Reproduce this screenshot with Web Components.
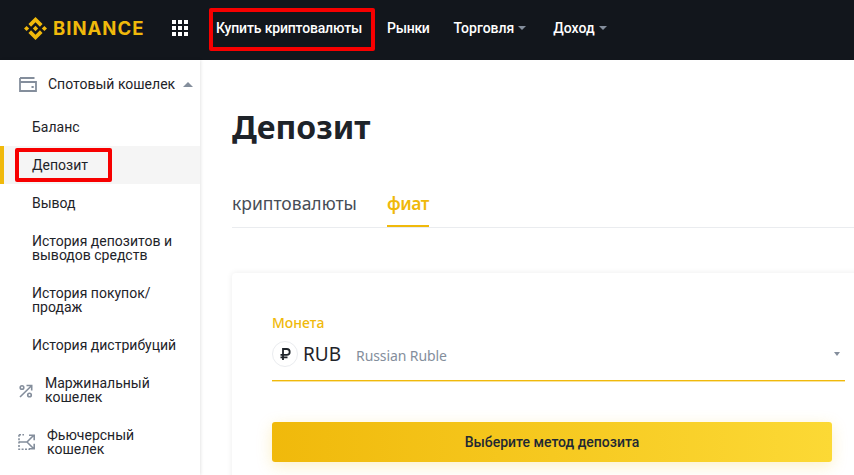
<!DOCTYPE html>
<html lang="ru">
<head>
<meta charset="utf-8">
<title>Депозит</title>
<style>
    html, body {
        margin: 0;
        height: 475px;
        overflow: hidden;
        background: #fff;
        font-family: "Noto Sans", Roboto, sans-serif;
    }
</style>
</head>
<body>
<app-page></app-page>

<script>
const NAV_FONT = `Roboto, "Noto Sans", sans-serif`;

class RedMark extends HTMLElement {
    constructor() {
        super();
        this.attachShadow({mode: 'open'}).innerHTML = `
<style>
    :host {
        display: inline-flex;
        align-items: center;
        position: relative;
    }
    i {
        position: absolute;
        inset: var(--mark-inset, 0);
        border: 4px solid #f70000;
        border-radius: 2px;
        pointer-events: none;
    }
</style>
<slot></slot><i></i>`;
    }
}

class TopBar extends HTMLElement {
    constructor() {
        super();
        this.attachShadow({mode: 'open'}).innerHTML = `
<style>
    :host {
        display: flex;
        align-items: center;
        box-sizing: border-box;
        height: 60px;
        padding: 0 0 4px 24px;
        background: #12161c;
        color: #fff;
        font: 500 14px ${NAV_FONT};
    }
    .logo {
        display: flex;
        align-items: center;
        gap: 6px;
        width: 148px;
        color: #f0b90b;
        font: 700 18.5px Inter, sans-serif;
        letter-spacing: 1px;
    }
    .apps {
        display: grid;
        grid-template-columns: repeat(3, 4px);
        gap: 2px;
        width: 16px;
        margin-right: 28px;
    }
    .apps i {
        width: 4px;
        height: 4px;
        background: #fff;
    }
    red-mark {
        --mark-inset: -12px -13px -15px -7px;
        margin-right: 25px;
        letter-spacing: -.16px;
    }
    .link {
        display: flex;
        align-items: center;
        gap: 4px;
        margin-right: 27px;
    }
    .link.short { margin-right: 24px; letter-spacing: -.3px; }
    .caret {
        width: 0;
        height: 0;
        border: 4px solid transparent;
        border-top: 4px solid #848e9c;
        border-bottom: 0;
    }
</style>
<div class="logo">
    <svg width="23" height="23" viewBox="0 0 24 24" fill="#f0b90b"><path d="M7.34 10.08 12 5.42l4.66 4.66 2.71-2.71L12 0 4.63 7.37zM0 12l2.71-2.71L5.42 12l-2.71 2.71zM7.34 13.92 12 18.58l4.66-4.66 2.71 2.71L12 24l-7.37-7.37zM18.58 12l2.71-2.71L24 12l-2.71 2.71zM14.75 12 12 9.25 9.25 12 12 14.75z"/></svg>
    <span>BINANCE</span>
</div>
<div class="apps"><i></i><i></i><i></i><i></i><i></i><i></i><i></i><i></i><i></i></div>
<red-mark>Купить криптовалюты</red-mark>
<div class="link short">Рынки</div>
<div class="link">Торговля<span class="caret"></span></div>
<div class="link">Доход<span class="caret"></span></div>`;
    }
}

class SideItem extends HTMLElement {
    constructor() {
        super();
        this.attachShadow({mode: 'open'}).innerHTML = `
<style>
    :host {
        display: flex;
        align-items: center;
        box-sizing: border-box;
        min-height: 38px;
        padding: 12px 12px 12px 32px;
        font-size: 14px;
        line-height: 14px;
        color: #1e2329;
    }
    :host([tall]) { min-height: 52px; }
    :host([active]) {
        background: #f5f5f5;
        box-shadow: inset 4px 0 0 #f0b90b;
    }
</style>
<slot></slot>`;
    }
}

class SideGroup extends HTMLElement {
    constructor() {
        super();
        this.attachShadow({mode: 'open'}).innerHTML = `
<style>
    :host {
        display: flex;
        align-items: center;
        box-sizing: border-box;
        min-height: 52px;
        padding-left: 19px;
        padding-right: var(--group-end, 24px);
        font-size: 14px;
        line-height: 14px;
        color: #1e2329;
    }
    .icon { display: flex; width: var(--icon-width, 26px); flex: none; }
    .text { flex: 1; }
</style>
<span class="icon"><slot name="icon"></slot></span>
<span class="text"><slot></slot></span>
<slot name="after"></slot>`;
    }
}

class SideBar extends HTMLElement {
    constructor() {
        super();
        this.attachShadow({mode: 'open'}).innerHTML = `
<style>
    :host {
        display: block;
        width: 200px;
        flex: none;
        height: 415px;
        overflow: hidden;
        background: #fff;
        box-shadow: 1px 0 3px rgba(0, 0, 0, .1);
        font-family: ${NAV_FONT};
    }
    .top { min-height: 48px; --icon-width: 29px; --group-end: 0px; }
    .caret {
        width: 0;
        height: 0;
        margin-right: 7px;
        border: 5px solid transparent;
        border-bottom: 5px solid #848e9c;
        border-top: 0;
    }
    red-mark { --mark-inset: -10px -24px -10px -17px; }
</style>
<side-group class="top">
    <svg slot="icon" width="18" height="15" viewBox="0 0 18 15" fill="none" stroke="#848e9c" stroke-width="1.8"><path d="M1 1h14.5M1 1v13h16V5H1"/><path d="M12.5 10h2.2" stroke-width="2"/></svg>
    Спотовый кошелек
    <span slot="after" class="caret"></span>
</side-group>
<side-item>Баланс</side-item>
<side-item active><red-mark>Депозит</red-mark></side-item>
<side-item>Вывод</side-item>
<side-item tall>История депозитов и выводов средств</side-item>
<side-item tall>История покупок/ продаж</side-item>
<side-item>История дистрибуций</side-item>
<side-group>
    <svg slot="icon" width="14" height="14" viewBox="0 0 14 14" fill="none" stroke="#848e9c" stroke-width="1.6" style="margin-top:1px"><circle cx="3" cy="3.5" r="1.8"/><circle cx="10.5" cy="11" r="1.8"/><path d="M1 13 12.5 1.8M7.5 1.5h5.2v5"/></svg>
    Маржинальный кошелек
</side-group>
<side-group style="--icon-width:29px;padding-left:18px">
    <svg slot="icon" width="18" height="16" viewBox="0 0 18 16" fill="none" stroke="#848e9c" stroke-width="1.6"><path d="M1 .8h5M1 .8v14.4h11" stroke-dasharray="2 1.4"/><path d="M1 8h8l6.5-6.5M9 8l6.5 6.5M11 1.2h5.2v5M16.2 9.8v5H11"/></svg>
    Фьючерсный кошелек
</side-group>`;
    }
}

class TabBar extends HTMLElement {
    constructor() {
        super();
        this.attachShadow({mode: 'open'}).innerHTML = `
<style>
    :host {
        display: flex;
        gap: 30px;
        height: 50px;
        box-sizing: border-box;
        border-bottom: 1px solid #eaecef;
        font-size: 17.5px;
        color: #474d57;
    }
    div {
        height: 49px;
        line-height: 50px;
        box-sizing: border-box;
    }
    .on {
        color: #f0b90b;
        font-weight: 600;
        letter-spacing: -.4px;
        border-bottom: 2px solid #f0b90b;
    }
</style>
<div>криптовалюты</div>
<div class="on">фиат</div>`;
    }
}

class CoinSelect extends HTMLElement {
    constructor() {
        super();
        this.attachShadow({mode: 'open'}).innerHTML = `
<style>
    :host {
        display: block;
        width: 573px;
    }
    label {
        display: block;
        font-size: 14px;
        line-height: 16px;
        font-weight: 500;
        color: #f0b90b;
    }
    .field {
        display: flex;
        align-items: center;
        height: 48px;
        margin-top: 2px;
        border-bottom: 1px solid #f0b90b;
        box-shadow: 0 1px 0 rgba(240, 185, 11, .4);
        box-sizing: border-box;
        padding-bottom: 5px;
    }
    .coin {
        display: flex;
        align-items: center;
        justify-content: center;
        box-sizing: border-box;
        width: 26px;
        height: 26px;
        border: 1px solid #eaecef;
        border-radius: 50%;
        margin-right: 5px;
    }
    .code {
        font-size: 19px;
        color: #1e2329;
        margin-right: 15px;
    }
    .name {
        flex: 1;
        font-size: 14px;
        letter-spacing: -.1px;
        color: #848e9c;
        padding-top: 2px;
    }
    .caret {
        width: 0;
        height: 0;
        margin-right: 5px;
        border: 3.5px solid transparent;
        border-top: 4px solid #848e9c;
        border-bottom: 0;
    }
</style>
<label>Монета</label>
<div class="field">
    <span class="coin">
        <svg width="11" height="12" viewBox="0 0 11 12" fill="none" stroke="#1e2329" stroke-width="1.8"><path d="M3 12V1h3.8a2.8 2.8 0 0 1 0 5.8H0.5M0.5 9.4H7.5"/></svg>
    </span>
    <span class="code">RUB</span>
    <span class="name">Russian Ruble</span>
    <span class="caret"></span>
</div>`;
    }
}

class DepositPanel extends HTMLElement {
    constructor() {
        super();
        this.attachShadow({mode: 'open'}).innerHTML = `
<style>
    :host {
        display: block;
        flex: 1;
        min-width: 0;
        overflow: hidden;
        padding-left: 32px;
    }
    h1 {
        margin: 0;
        height: 118px;
        padding-top: 47px;
        box-sizing: border-box;
        font-size: 32px;
        line-height: 40px;
        font-weight: 700;
        color: #1e2329;
    }
    .card {
        margin-top: 45px;
        width: 680px;
        box-sizing: border-box;
        padding: 42px 40px 60px;
        border-radius: 4px;
        box-shadow: 0 0 6px rgba(0, 0, 0, .08);
        background: #fff;
    }
    button {
        display: block;
        width: 560px;
        height: 40px;
        margin-top: 41px;
        border: 0;
        border-radius: 3px;
        background: linear-gradient(90deg, #f0b90b, #fcd935);
        box-shadow: 0 4px 16px rgba(240, 185, 11, .22);
        font: 500 14px ${NAV_FONT};
        color: #212833;
    }
</style>
<h1>Депозит</h1>
<tab-bar></tab-bar>
<div class="card">
    <coin-select></coin-select>
    <button>Выберите метод депозита</button>
</div>`;
    }
}

class AppPage extends HTMLElement {
    constructor() {
        super();
        this.attachShadow({mode: 'open'}).innerHTML = `
<style>
    :host {
        display: block;
        height: 475px;
        overflow: hidden;
    }
    .body { display: flex; }
</style>
<top-bar></top-bar>
<div class="body">
    <side-bar></side-bar>
    <deposit-panel></deposit-panel>
</div>`;
    }
}

customElements.define('red-mark', RedMark);
customElements.define('top-bar', TopBar);
customElements.define('side-item', SideItem);
customElements.define('side-group', SideGroup);
customElements.define('side-bar', SideBar);
customElements.define('tab-bar', TabBar);
customElements.define('coin-select', CoinSelect);
customElements.define('deposit-panel', DepositPanel);
customElements.define('app-page', AppPage);
</script>
</body>
</html>
